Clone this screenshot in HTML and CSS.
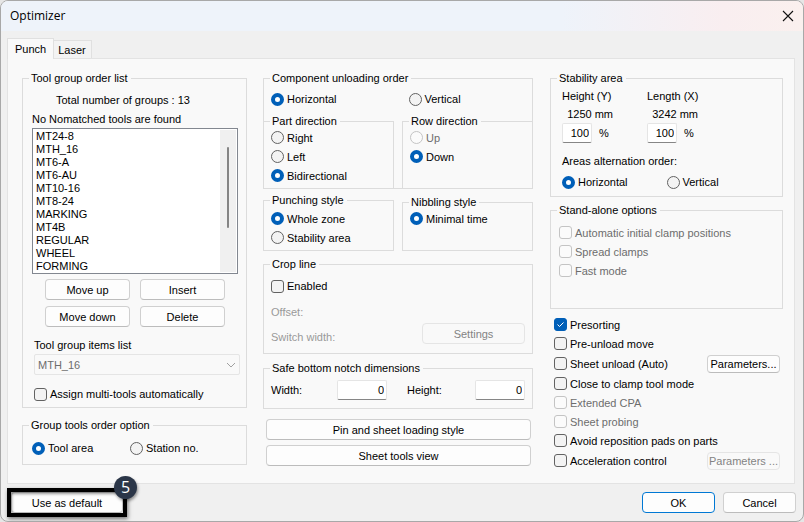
FILE: index.html
```html
<!DOCTYPE html>
<html lang="en">
<head>
    <meta charset="UTF-8">
    <meta name="viewport" content="width=device-width, initial-scale=1.0">
    <title>Optimizer</title>
    <link rel="stylesheet" href="styles.css">
</head>
<body>
    <div class="window">
        <header class="titlebar">
            <h1>Optimizer</h1>
            <button type="button" class="close" aria-label="Close">
                <svg width="12" height="12" viewBox="0 0 12 12"><path d="M1 1L11 11M11 1L1 11" stroke="#111" stroke-width="1.1" fill="none"/></svg>
            </button>
        </header>

        <div class="tabs" role="tablist">
            <button type="button" class="tab active" role="tab" aria-selected="true">Punch</button>
            <button type="button" class="tab" role="tab" aria-selected="false">Laser</button>
        </div>

        <form class="panel" id="punch">
            <div class="column">
                <fieldset class="tool-groups">
                    <legend>Tool group order list</legend>
                    <p class="total">Total number of groups : 13</p>
                    <label class="list-label" for="groups">No Nomatched tools are found</label>
                    <div class="list">
                        <select class="listbox" id="groups" size="11">
                            <option>MT24-8</option>
                            <option>MTH_16</option>
                            <option>MT6-A</option>
                            <option>MT6-AU</option>
                            <option>MT10-16</option>
                            <option>MT8-24</option>
                            <option>MARKING</option>
                            <option>MT4B</option>
                            <option>REGULAR</option>
                            <option>WHEEL</option>
                            <option>FORMING</option>
                        </select>
                        <div class="scrollbar"><div class="thumb"></div></div>
                    </div>
                    <div class="list-buttons">
                        <button type="button" class="btn">Move up</button>
                        <button type="button" class="btn">Insert</button>
                        <button type="button" class="btn">Move down</button>
                        <button type="button" class="btn">Delete</button>
                    </div>
                    <label class="items-label" for="items">Tool group items list</label>
                    <div class="dropdown">
                        <select id="items" disabled>
                            <option>MTH_16</option>
                        </select>
                        <svg width="10" height="6" viewBox="0 0 10 6"><path d="M1 1L5 5L9 1" stroke="#a0a0a0" fill="none"/></svg>
                    </div>
                    <label class="check assign"><input type="checkbox">Assign multi-tools automatically</label>
                </fieldset>

                <fieldset class="order-option">
                    <legend>Group tools order option</legend>
                    <div class="pair">
                        <label class="check"><input type="radio" name="order" checked>Tool area</label>
                        <label class="check"><input type="radio" name="order">Station no.</label>
                    </div>
                </fieldset>
            </div>

            <div class="column">
                <fieldset class="unloading">
                    <legend>Component unloading order</legend>
                    <div class="pair">
                        <label class="check"><input type="radio" name="unload" checked>Horizontal</label>
                        <label class="check"><input type="radio" name="unload">Vertical</label>
                    </div>
                    <div class="halves">
                        <fieldset>
                            <legend>Part direction</legend>
                            <label class="check row"><input type="radio" name="part">Right</label>
                            <label class="check row"><input type="radio" name="part">Left</label>
                            <label class="check row"><input type="radio" name="part" checked>Bidirectional</label>
                        </fieldset>
                        <fieldset>
                            <legend>Row direction</legend>
                            <label class="check row disabled"><input type="radio" name="rowdir" disabled>Up</label>
                            <label class="check row"><input type="radio" name="rowdir" checked>Down</label>
                        </fieldset>
                    </div>
                </fieldset>

                <div class="halves styles">
                    <fieldset class="punching">
                        <legend>Punching style</legend>
                        <label class="check row"><input type="radio" name="punching" checked>Whole zone</label>
                        <label class="check row"><input type="radio" name="punching">Stability area</label>
                    </fieldset>
                    <fieldset class="nibbling">
                        <legend>Nibbling style</legend>
                        <label class="check row"><input type="radio" name="nibbling" checked>Minimal time</label>
                    </fieldset>
                </div>

                <fieldset class="crop">
                    <legend>Crop line</legend>
                    <label class="check"><input type="checkbox">Enabled</label>
                    <p class="offset">Offset:</p>
                    <div class="switch">
                        <p>Switch width:</p>
                        <button type="button" class="btn" disabled>Settings</button>
                    </div>
                </fieldset>

                <fieldset class="notch">
                    <legend>Safe bottom notch dimensions</legend>
                    <div class="notch-fields">
                        <label for="notch-w">Width:</label>
                        <input type="text" class="field" id="notch-w" value="0">
                        <label for="notch-h">Height:</label>
                        <input type="text" class="field" id="notch-h" value="0">
                    </div>
                </fieldset>

                <div class="wide-buttons">
                    <button type="button" class="btn">Pin and sheet loading style</button>
                    <button type="button" class="btn">Sheet tools view</button>
                </div>
            </div>

            <div class="column">
                <fieldset class="stability">
                    <legend>Stability area</legend>
                    <div class="sizes">
                        <div class="size">
                            <label for="size-y">Height (Y)</label>
                            <p>1250 mm</p>
                            <div class="percent"><input type="text" class="field" id="size-y" value="100"><span>%</span></div>
                        </div>
                        <div class="size">
                            <label for="size-x">Length (X)</label>
                            <p>3242 mm</p>
                            <div class="percent"><input type="text" class="field" id="size-x" value="100"><span>%</span></div>
                        </div>
                    </div>
                    <p class="areas">Areas alternation order:</p>
                    <div class="pair">
                        <label class="check"><input type="radio" name="areas" checked>Horizontal</label>
                        <label class="check"><input type="radio" name="areas">Vertical</label>
                    </div>
                </fieldset>

                <fieldset class="standalone">
                    <legend>Stand-alone options</legend>
                    <label class="check row disabled"><input type="checkbox" disabled>Automatic initial clamp positions</label>
                    <label class="check row disabled"><input type="checkbox" disabled>Spread clamps</label>
                    <label class="check row disabled"><input type="checkbox" disabled>Fast mode</label>
                </fieldset>

                <div class="options">
                    <label class="check row"><input type="checkbox" checked>Presorting</label>
                    <label class="check row"><input type="checkbox">Pre-unload move</label>
                    <div class="option-row">
                        <label class="check"><input type="checkbox">Sheet unload (Auto)</label>
                        <button type="button" class="btn small">Parameters...</button>
                    </div>
                    <label class="check row"><input type="checkbox">Close to clamp tool mode</label>
                    <label class="check row disabled"><input type="checkbox" disabled>Extended CPA</label>
                    <label class="check row disabled"><input type="checkbox" disabled>Sheet probing</label>
                    <label class="check row"><input type="checkbox">Avoid reposition pads on parts</label>
                    <div class="option-row">
                        <label class="check"><input type="checkbox">Acceleration control</label>
                        <button type="button" class="btn small" disabled>Parameters ...</button>
                    </div>
                </div>
            </div>
        </form>

        <footer class="footer">
            <div class="default">
                <button type="button" class="btn">Use as default</button>
                <span class="badge">5</span>
            </div>
            <button type="button" class="btn ok">OK</button>
            <button type="button" class="btn">Cancel</button>
        </footer>
    </div>
</body>
</html>
```
FILE: styles.css
```css
* {
    box-sizing: border-box;
}

body {
    margin: 0;
    background-color: #e6e6e6;
    color: #000;
    font-family: "Liberation Sans", Arial, sans-serif;
    font-size: 11px;
    line-height: 14px;
}

p, h1 {
    margin: 0;
}

button, input, select {
    font: inherit;
    color: inherit;
    margin: 0;
}

.window {
    display: flex;
    flex-direction: column;
    min-height: 100vh;
    background-color: #f0f0f0;
    border: 1px solid #a8a8a8;
    border-radius: 8px;
    overflow: hidden;
}

/* title bar */
.titlebar {
    display: flex;
    justify-content: space-between;
    align-items: center;
    height: 30px;
    padding: 0 9px;
    background: linear-gradient(to right, #eef3fa 70%, #f9eef0 90%, #faf0ee);
}

.titlebar h1 {
    font-family: "Open Sans", sans-serif;
    font-size: 12px;
    font-weight: 400;
}

.close {
    display: flex;
    padding: 0;
    border: none;
    background: none;
}

/* tabs */
.tabs {
    display: flex;
    align-items: flex-end;
    height: 27px;
    padding: 0 6px;
}

.tab {
    height: 18px;
    padding: 0 5px 0 4px;
    border: 1px solid #e0e0e0;
    border-left: none;
    border-bottom: none;
    background-color: #f3f3f3;
}

.tab.active {
    position: relative;
    z-index: 1;
    height: 21px;
    margin-bottom: -1px;
    padding: 0 7px;
    border-left: 1px solid #e0e0e0;
    background-color: #f9f9f9;
}

.panel {
    display: grid;
    grid-template-columns: 225fr 270fr 234fr;
    gap: 16px;
    margin: 0 8px 0 6px;
    padding: 12px 11px 12px 14px;
    border: 1px solid #e3e3e3;
    background-color: #f9f9f9;
}

.column:last-child {
    padding-left: 1px;
}

/* group boxes */
fieldset {
    min-width: 0;
    margin: 0;
    padding: 0 7px;
    border: 1px solid #dcdcdc;
}

legend {
    margin-left: -1px;
    padding: 0 3px 0 2px;
}

/* radios and tick boxes */
.check {
    display: flex;
    align-items: center;
    gap: 3px;
    height: 14px;
    white-space: nowrap;
}

.check.row {
    height: 19px;
}

.check input {
    appearance: none;
    flex: none;
    width: 13px;
    height: 13px;
    border: 1px solid #626262;
    background-color: #f3f3f3;
}

.check input[type="radio"] {
    border-radius: 50%;
}

.check input[type="checkbox"] {
    border-radius: 3px;
}

.check input[type="radio"]:checked {
    border: 4px solid #005fb8;
    background-color: #fff;
}

.check input[type="checkbox"]:checked {
    border-color: #005fb8;
    background: #005fb8 url("data:image/svg+xml,%3Csvg xmlns='http://www.w3.org/2000/svg' viewBox='0 0 11 11'%3E%3Cpath d='M2.5 5.5L4.5 7.5L8.5 3.5' fill='none' stroke='white'/%3E%3C/svg%3E");
}

.check.disabled {
    color: #6d6d6d;
}

.check.disabled input {
    border-color: #c4c4c4;
    background-color: #fbfbfb;
}

.pair {
    display: grid;
    grid-template-columns: 1fr 1fr;
}

/* buttons */
.btn {
    height: 21px;
    padding: 0 3px;
    border: 1px solid #d0d0d0;
    border-bottom-color: #bcbcbc;
    border-radius: 4px;
    background-color: #fdfdfd;
    white-space: nowrap;
}

.btn:disabled {
    border-color: #e5e5e5;
    background-color: #f9f9f9;
    color: #838383;
}

.btn.small {
    width: 73px;
    height: 18px;
    padding: 0;
}

/* text boxes */
.field {
    width: 50px;
    height: 20px;
    padding: 0 2px;
    border: 1px solid #e5e5e5;
    border-bottom-color: #868686;
    border-radius: 2px;
    background-color: #fff;
    text-align: right;
}

/* left column */
.tool-groups {
    margin-bottom: 10px;
    padding: 8px 8px 6px 9px;
}

.tool-groups legend {
    margin-left: -3px;
}

.total {
    padding-left: 24px;
}

.list-label {
    display: block;
    margin-top: 5px;
}

.list {
    position: relative;
    margin-top: 2px;
}

.listbox {
    display: block;
    width: 100%;
    height: 146px;
    padding: 1px 0 0;
    border: 1px solid #828790;
    border-radius: 0;
    background-color: #fff;
    outline: none;
}

.listbox option {
    min-height: 13px;
    padding: 0 3px;
    line-height: 13px;
}

.scrollbar {
    position: absolute;
    top: 2px;
    right: 2px;
    bottom: 2px;
    width: 16px;
    padding: 17px 7px;
    background-color: #f0f0f0;
}

.thumb {
    height: 75%;
    border-radius: 1px;
    background-color: #858585;
}

.list-buttons {
    display: grid;
    grid-template-columns: 1fr 1fr;
    gap: 6px 10px;
    margin-top: 5px;
    padding: 0 13px;
}

.items-label {
    display: block;
    margin: 11px 0 0 2px;
}

.dropdown {
    display: flex;
    align-items: center;
    margin: 2px -2px 0 2px;
    padding-right: 3px;
    border: 1px solid #e5e5e5;
    border-radius: 2px;
}

.dropdown select {
    flex: 1;
    appearance: none;
    height: 19px;
    padding: 0 3px;
    border: none;
    background: none;
    color: #6d6d6d;
    opacity: 1;
}

.assign {
    margin: 12px 0 0 2px;
}

.order-option {
    padding: 9px;
}

.order-option legend {
    margin-left: -3px;
}

.order-option .pair {
    grid-template-columns: 99fr 108fr;
}

/* middle column */
.unloading {
    padding: 7px 0 0;
}

.unloading > legend {
    margin-left: 6px;
}

.unloading > .pair {
    padding-left: 7px;
}

.unloading .pair .check:last-child {
    padding-left: 7px;
}

.halves {
    display: grid;
    grid-template-columns: 1fr 1fr;
    gap: 8px;
}

.unloading .halves {
    margin: 8px -1px -1px;
}

.unloading .halves fieldset {
    padding-bottom: 3px;
}

.styles {
    margin-top: 4px;
}

.punching {
    padding: 2px 7px 3px;
}

.nibbling {
    margin-top: 2px;
}

.crop {
    margin-top: 6px;
    padding: 8px 7px 9px;
}

.offset, .switch {
    color: #9a9a9a;
}

.offset {
    margin-top: 12px;
}

.switch {
    display: flex;
    justify-content: space-between;
    align-items: flex-end;
    margin-top: 4px;
}

.switch .btn {
    width: 103px;
}

.notch {
    margin-top: 7px;
    padding: 5px 7px 8px;
}

.notch-fields {
    display: grid;
    grid-template-columns: 66px 50px 1fr 50px;
    align-items: center;
}

.notch-fields label:nth-of-type(2) {
    padding-left: 20px;
}

.wide-buttons {
    display: flex;
    flex-direction: column;
    gap: 5px;
    margin-top: 10px;
    padding: 0 2px 0 3px;
}

/* right column */
.stability {
    padding: 4px 11px 7px;
}

.stability legend {
    margin-left: -5px;
}

.sizes {
    display: flex;
    gap: 34px;
}

.size {
    width: 51px;
    white-space: nowrap;
}

.size label, .size p {
    display: block;
}

.size p {
    margin: 4px 0 2px;
    text-align: right;
}

.percent {
    display: flex;
    align-items: center;
    gap: 7px;
}

.percent .field {
    width: 30px;
}

.areas {
    margin: 11px 0 7px;
}

.standalone {
    margin-top: 6px;
    padding: 6px 8px 28px;
}

.standalone legend {
    margin-left: -2px;
}

.options {
    margin-top: 6px;
    padding: 0 3px 0 4px;
}

.option-row {
    display: flex;
    justify-content: space-between;
    align-items: center;
    height: 21px;
}

/* bottom bar */
.footer {
    display: flex;
    gap: 8px;
    padding: 8px 7px 8px 10px;
}

.footer .btn {
    width: 73px;
}

.footer .ok {
    border-color: #0078d4;
}

.default {
    position: relative;
    margin-right: auto;
}

.default .btn {
    width: 112px;
}

/* highlight frame over the button */
.default::after {
    content: "";
    position: absolute;
    inset: -4px;
    border: 4px solid #000;
    box-shadow: 1px 2px 4px rgba(0, 0, 0, 0.5), inset 1px 2px 3px rgba(0, 0, 0, 0.4);
    pointer-events: none;
}

.badge {
    position: absolute;
    z-index: 1;
    top: -16px;
    right: -14px;
    width: 23px;
    height: 23px;
    border-radius: 50%;
    background-color: #2b3648;
    box-shadow: 1px 2px 3px rgba(0, 0, 0, 0.4);
    color: #fff;
    font-family: "Open Sans", sans-serif;
    font-size: 16px;
    line-height: 23px;
    text-align: center;
}
```
